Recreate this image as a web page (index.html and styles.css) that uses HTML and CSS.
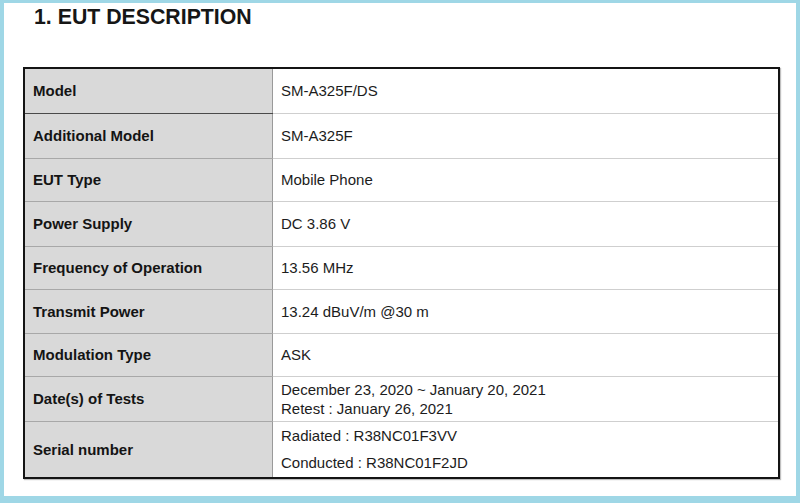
FILE: index.html
```html
<!DOCTYPE html>
<html>
<head>
<meta charset="utf-8">
<link rel="stylesheet" href="styles.css">
</head>
<body>
<div class="frame">
  <h1 class="title">1. EUT DESCRIPTION</h1>
  <table class="spec">
    <tr class="r45 first"><th>Model</th><td>SM-A325F/DS</td></tr>
    <tr class="r45"><th>Additional Model</th><td>SM-A325F</td></tr>
    <tr class="r43"><th>EUT Type</th><td>Mobile Phone</td></tr>
    <tr class="r45"><th>Power Supply</th><td>DC 3.86 V</td></tr>
    <tr class="r43"><th>Frequency of Operation</th><td>13.56 MHz</td></tr>
    <tr class="r44"><th>Transmit Power</th><td>13.24 dBuV/m @30 m</td></tr>
    <tr class="r43"><th>Modulation Type</th><td>ASK</td></tr>
    <tr class="r45"><th>Date(s) of Tests</th><td class="dates"><div>December 23, 2020 ~ January 20, 2021</div><div>Retest : January 26, 2021</div></td></tr>
    <tr class="r57 last"><th>Serial number</th><td class="serial"><div>Radiated : R38NC01F3VV</div><div>Conducted : R38NC01F2JD</div></td></tr>
  </table>
</div>
</body>
</html>
```

FILE: styles.css
```css
html, body {
  margin: 0;
  padding: 0;
  background: #ffffff;
}
.frame {
  box-sizing: border-box;
  width: 800px;
  height: 503px;
  border-style: solid;
  border-color: #9fd7e6;
  border-width: 3px 4px 7px 4px;
  background: #ffffff;
  font-family: "Liberation Sans", Arial, sans-serif;
  color: #111;
  overflow: hidden;
}
.title {
  margin: 0;
  padding: 2px 0 0 30px;
  font-size: 21.3px;
  line-height: 24px;
  font-weight: bold;
  color: #161616;
}
.spec {
  margin: 38px 0 0 19px;
  width: 757px;
  border-collapse: collapse;
  border: 2px solid #141414;
  box-shadow: 1px 1px 1px rgba(0,0,0,0.25);
  table-layout: fixed;
}
.spec th, .spec td {
  padding: 0;
  font-size: 15px;
  vertical-align: middle;
  text-align: left;
}
.spec th {
  width: 239px;
  padding-left: 8px;
  background: #d9d9d9;
  font-weight: bold;
  color: #141414;
  border-right: 1px solid #9a9a9a;
  border-bottom: 1px solid #a8a8a8;
}
.spec td {
  padding-left: 8px;
  color: #1c1c1c;
  border-bottom: 1px solid #cfcfcf;
}
.spec .first th { border-bottom-color: #4a4a4a; }
.spec .last th, .spec .last td { border-bottom: none; }
.r45 { height: 45px; }
.r44 { height: 44px; }
.r43 { height: 43px; }
.r57 { height: 57px; }
.dates div { line-height: 19px; }
.serial div { line-height: 27px; }
```
